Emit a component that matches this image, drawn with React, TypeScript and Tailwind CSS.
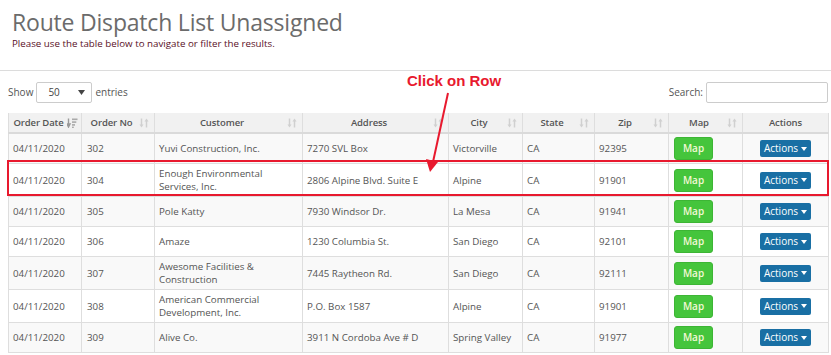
const rows = [
  { date: '04/11/2020', no: '302', customer: 'Yuvi Construction, Inc.', address: '7270 SVL Box', city: 'Victorville', state: 'CA', zip: '92395' },
  { date: '04/11/2020', no: '304', customer: 'Enough Environmental Services, Inc.', address: '2806 Alpine Blvd. Suite E', city: 'Alpine', state: 'CA', zip: '91901' },
  { date: '04/11/2020', no: '305', customer: 'Pole Katty', address: '7930 Windsor Dr.', city: 'La Mesa', state: 'CA', zip: '91941' },
  { date: '04/11/2020', no: '306', customer: 'Amaze', address: '1230 Columbia St.', city: 'San Diego', state: 'CA', zip: '92101' },
  { date: '04/11/2020', no: '307', customer: 'Awesome Facilities & Construction', address: '7445 Raytheon Rd.', city: 'San Diego', state: 'CA', zip: '92111' },
  { date: '04/11/2020', no: '308', customer: 'American Commercial Development, Inc.', address: 'P.O. Box 1587', city: 'Alpine', state: 'CA', zip: '91901' },
  { date: '04/11/2020', no: '309', customer: 'Alive Co.', address: '3911 N Cordoba Ave # D', city: 'Spring Valley', state: 'CA', zip: '91977' },
];

const columns = [
  { label: 'Order Date', width: 73, sort: 'desc' },
  { label: 'Order No', width: 73, sort: 'both' },
  { label: 'Customer', width: 148, sort: 'both' },
  { label: 'Address', width: 146, sort: 'both' },
  { label: 'City', width: 74, sort: 'both' },
  { label: 'State', width: 72, sort: 'both' },
  { label: 'Zip', width: 74, sort: 'both' },
  { label: 'Map', width: 74, sort: 'both' },
  { label: 'Actions', width: 86, sort: 'none' },
];

function SortIcon({ kind }: { kind: string }) {
  if (kind === 'none') return null;
  if (kind === 'desc') {
    return (
      <svg width="11" height="10" viewBox="0 0 11 10" className="absolute right-[3px] top-1/2 -translate-y-1/2">
        <path d="M1.5 0.5 V7.5 M0 6 L1.5 9 L3 6 Z" stroke="#999" strokeWidth="1.4" fill="#999" />
        <rect x="5" y="0.5" width="5.5" height="1.6" fill="#aaa" />
        <rect x="5" y="3.3" width="4.3" height="1.6" fill="#aaa" />
        <rect x="5" y="6.1" width="3" height="1.6" fill="#aaa" />
        <rect x="5" y="8.6" width="1.8" height="1.4" fill="#aaa" />
      </svg>
    );
  }
  return (
    <svg width="10" height="10" viewBox="0 0 10 10" className="absolute right-[5px] top-1/2 -translate-y-1/2">
      <path d="M2.5 0.5 V7.5" stroke="#d0d0d0" strokeWidth="1.5" />
      <path d="M0.5 6.5 L2.5 9.5 L4.5 6.5 Z" fill="#d0d0d0" />
      <path d="M7.5 2.5 V9.5" stroke="#d0d0d0" strokeWidth="1.5" />
      <path d="M5.5 3.5 L7.5 0.5 L9.5 3.5 Z" fill="#d0d0d0" />
    </svg>
  );
}

export default function App() {
  return (
    <div className="relative w-[831px] h-[355px] overflow-hidden bg-white text-[#555]" style={{ fontFamily: '"Open Sans", sans-serif' }}>
      <div className="px-[12px] pt-[7px]">
        <h1 className="text-[23px] leading-[30px] text-[#6b6b6b] font-normal tracking-[-0.2px]">Route Dispatch List Unassigned</h1>
        <p className="text-[9.75px] leading-[12px] text-[#5a0f1f] mt-[1px]">Please use the table below to navigate or filter the results.</p>
      </div>
      <div className="mt-[20px] border-t border-[#dcdcdc]" />

      <div className="flex items-center justify-between pl-[8px] pr-[3px] mt-[11px] text-[10px]">
        <div className="flex items-center">
          <span>Show</span>
          <div className="ml-[3px] w-[56px] h-[21px] border border-[#ccc] rounded-[2px] flex items-center justify-between pl-[11px] pr-[6px] text-[#444]">
            <span>50</span>
            <svg width="7" height="5" viewBox="0 0 7 5"><path d="M0 0 H7 L3.5 5 Z" fill="#444" /></svg>
          </div>
          <span className="ml-[3px]">entries</span>
        </div>
        <div className="flex items-center">
          <span>Search:</span>
          <div className="ml-[3px] w-[122px] h-[21px] border border-[#ccc] rounded-[2px]" />
        </div>
      </div>

      <table className="ml-[8px] mt-[10px] table-fixed border-collapse w-[820px] text-[9.75px] leading-[13px]">
        <colgroup>
          {columns.map((c) => (
            <col key={c.label} style={{ width: c.width }} />
          ))}
        </colgroup>
        <thead>
          <tr className="bg-[#f1f1f1]">
            {columns.map((c) => (
              <th
                key={c.label}
                className={`relative h-[20px] whitespace-nowrap border-x border-[#dedede] border-b-2 border-b-[#dadada] font-semibold text-[9.5px] tracking-[-0.1px] text-[#555] text-center pl-[3px] ${c.sort === 'none' ? 'pr-[3px]' : 'pr-[16px]'}`}
              >
                {c.label}
                <SortIcon kind={c.sort} />
              </th>
            ))}
          </tr>
        </thead>
        <tbody>
          {rows.map((r, i) => (
            <tr key={r.no} className={i % 2 === 0 ? 'bg-[#f9f9f9]' : 'bg-white'}>
              <td className="border border-[#dedede] px-[4px] py-[3px]">{r.date}</td>
              <td className="border border-[#dedede] px-[5px] py-[3px]">{r.no}</td>
              <td className="border border-[#dedede] px-[4px] py-[3px]">{r.customer}</td>
              <td className="border border-[#dedede] px-[4px] py-[3px]">{r.address}</td>
              <td className="border border-[#dedede] px-[4px] py-[3px]">{r.city}</td>
              <td className="border border-[#dedede] px-[4px] py-[3px]">{r.state}</td>
              <td className="border border-[#dedede] px-[4px] py-[3px]">{r.zip}</td>
              <td className="border border-[#dedede] px-[5px] py-[3px]">
                <button className="w-[39px] h-[23px] rounded-[3px] bg-[#45c53c] border border-[#3db535] text-[#f3f8d6] text-[10px] font-semibold align-middle">Map</button>
              </td>
              <td className="border border-[#dedede] px-[4px] py-[3px] text-center">
                <button className="inline-flex items-center justify-center gap-[3px] w-[51px] h-[17px] rounded-[2px] bg-[#196fa4] text-white text-[10px] align-middle">
                  Actions
                  <svg width="6" height="4" viewBox="0 0 6 4"><path d="M0 0 H6 L3 4 Z" fill="#fff" /></svg>
                </button>
              </td>
            </tr>
          ))}
        </tbody>
      </table>

      {/* annotation overlay */}
      <div className="absolute left-[7px] top-[160px] w-[822px] h-[36px] border-2 border-[#e8192e] pointer-events-none" />
      <div className="absolute left-[407px] top-[72px] text-[15px] leading-[18px] font-bold text-[#e8192e]" style={{ fontFamily: '"Liberation Sans", Arial, sans-serif' }}>
        Click on Row
      </div>
      <svg className="absolute left-[420px] top-[90px]" width="40" height="86" viewBox="0 0 40 86">
        <line x1="28" y1="3" x2="13" y2="72" stroke="#e8192e" strokeWidth="2" />
        <path d="M6 69 L18 72 L10 82 Z" fill="#e8192e" />
      </svg>
    </div>
  );
}
